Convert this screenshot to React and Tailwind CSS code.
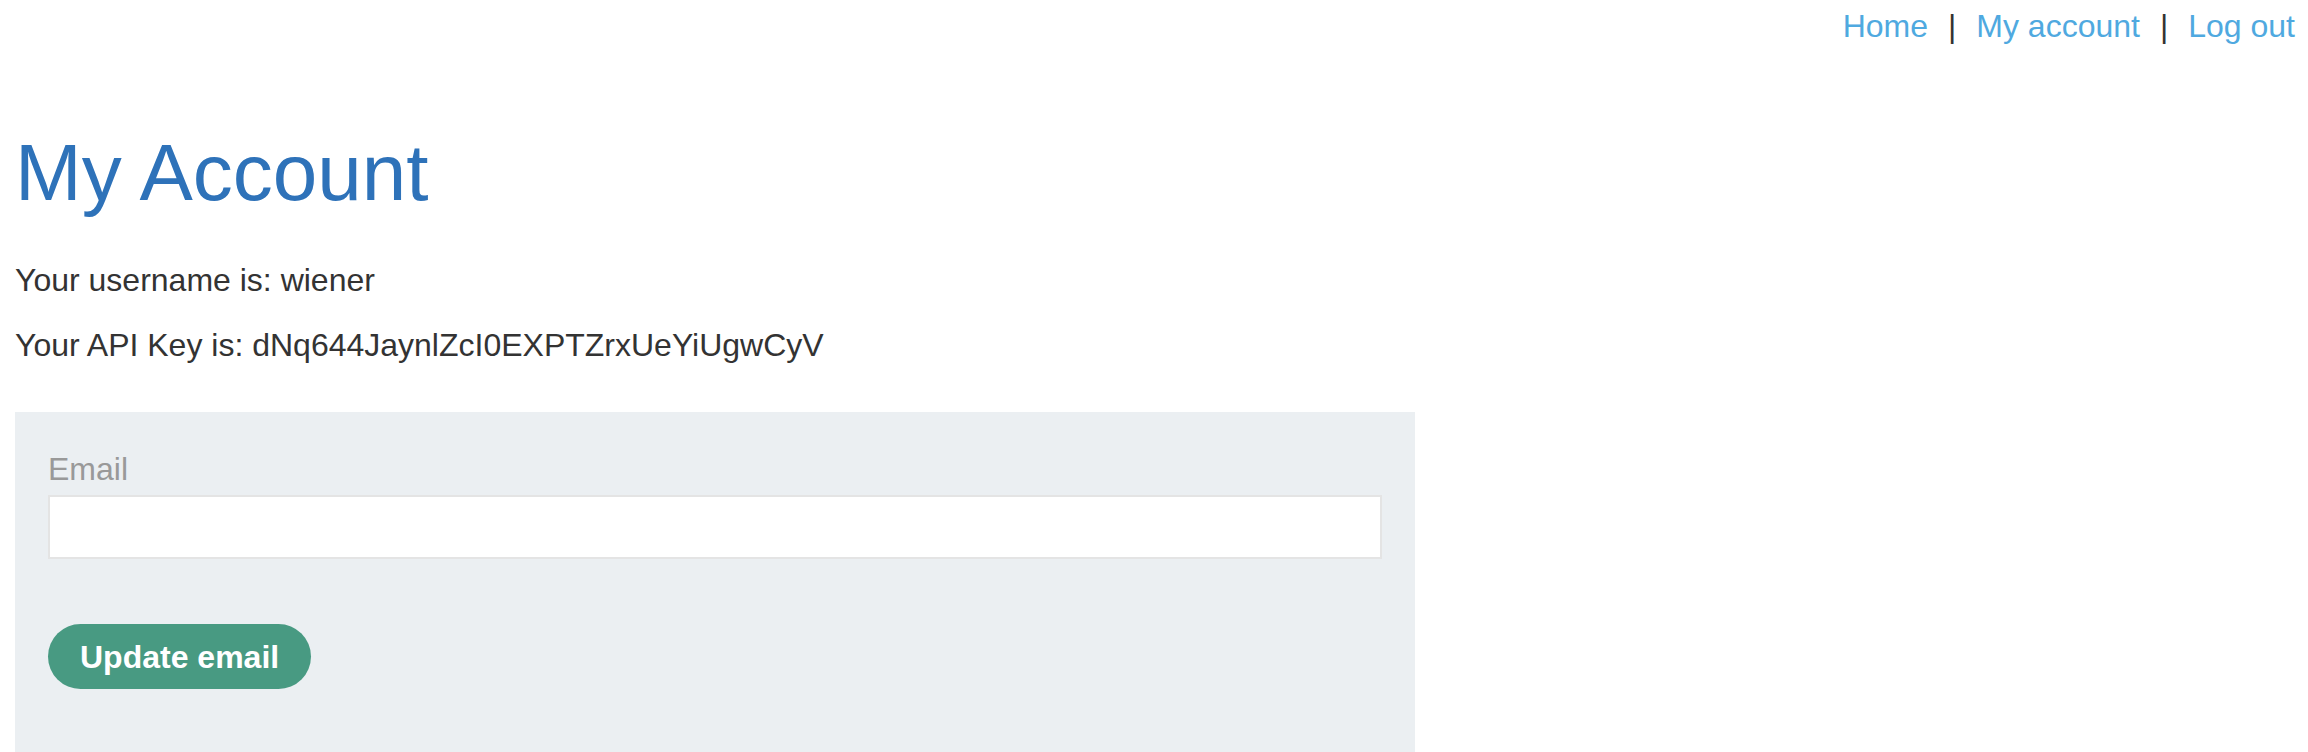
import React, { useState } from "react";

function App() {
  const [email, setEmail] = useState("");

  return (
    <div className="min-h-screen bg-white font-['Liberation_Sans',Arial,sans-serif] text-[#333333]">
      {/* Top nav */}
      <header className="flex justify-end pr-[13px] pt-[6px] text-[32px] leading-[40px]">
        <a href="#" className="text-[#4fa9e0]">
          Home
        </a>
        <span className="mx-[20px]">|</span>
        <a href="#" className="text-[#4fa9e0]">
          My account
        </a>
        <span className="mx-[20px]">|</span>
        <a href="#" className="text-[#4fa9e0]">
          Log out
        </a>
      </header>

      <main className="px-[15px]">
        <h1 className="mt-[87px] text-[80px] leading-[80px] text-[#2e72b9]">
          My Account
        </h1>

        <p className="mt-[47px] text-[32px] leading-[40px]">
          Your username is: wiener
        </p>
        <p className="mt-[25px] text-[32px] leading-[40px]">
          Your API Key is: dNq644JaynlZcI0EXPTZrxUeYiUgwCyV
        </p>

        {/* Email form */}
        <form
          className="mt-[47px] w-[1400px] bg-[#ebeff2] px-[33px] pt-[37px] pb-[80px]"
          onSubmit={(e) => e.preventDefault()}
        >
          <label className="block text-[32px] leading-[40px] text-[#999999]">
            Email
          </label>
          <input
            type="email"
            value={email}
            onChange={(e) => setEmail(e.target.value)}
            className="mt-[6px] block h-[64px] w-full border-2 border-[#e4e4e4] bg-white px-3 text-[32px] outline-none"
          />

          <button
            type="submit"
            className="mt-[65px] h-[65px] rounded-full bg-[#489a82] px-[32px] text-[32px] font-bold text-white"
          >
            Update email
          </button>
        </form>
      </main>
    </div>
  );
}

export default App;
